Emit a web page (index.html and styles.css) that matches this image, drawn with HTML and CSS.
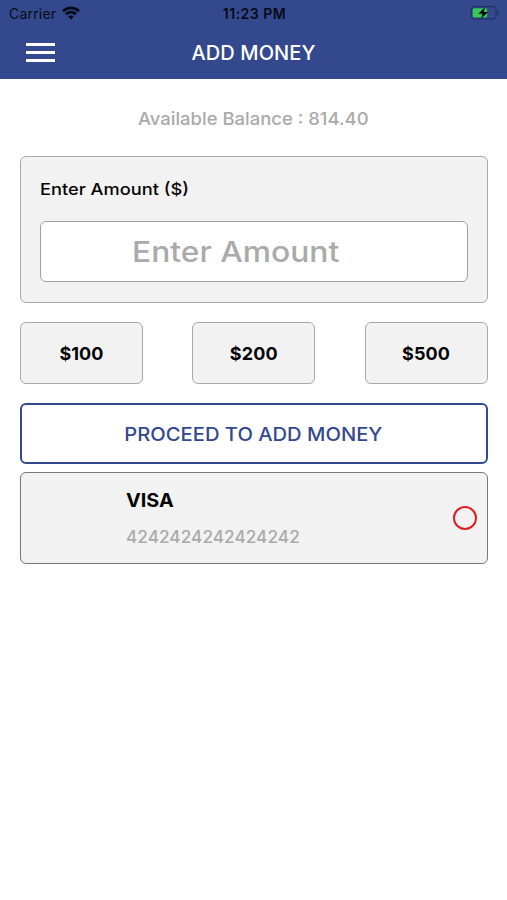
FILE: index.html
```html
<!DOCTYPE html>
<html lang="en">
<head>
<meta charset="utf-8">
<title>Add Money</title>
<link rel="stylesheet" href="styles.css">
</head>
<body>
<header class="header">
  <div class="status">
    <div class="carrier"><span>Carrier</span>
      <svg width="18" height="14" viewBox="0 0 18 14" fill="none" stroke="#050a18" stroke-width="2.7"><path d="M1 5.200C5.500.700 12.500.700 17 5.200M4 8.300c2.800-2.800 7.200-2.800 10 0"/><path d="M6.200 10.600c1.600-1.500 4-1.500 5.600 0L9 13.500z" fill="#050a18" stroke="none"/></svg>
    </div>
    <time class="time">11:23 PM</time>
    <svg class="battery" width="30" height="14" viewBox="0 0 30 14"><rect x="1.200" y=".7" width="25" height="12.200" rx="3" fill="none" stroke="#1e2b57"/><rect x="2.700" y="2.200" width="14.500" height="9.200" rx="1.500" fill="#35c759"/><path d="M27.700 4.500c2 1 2 3.600 0 4.600z" fill="#1e2b57"/><path d="M14.800 1.500 8.300 7.700h4.200l-1.300 4.800 6.900-6.500h-4.300z" fill="#020611"/></svg>
  </div>
  <div class="navbar">
    <button class="menu" aria-label="Menu"><i></i><i></i><i></i></button>
    <h1 class="title">ADD MONEY</h1>
  </div>
</header>
<main class="content">
  <p class="balance"><span class="wide">Available Balance : 814.40</span></p>
  <section class="amount">
    <label class="label"><span class="wide">Enter Amount ($)</span></label>
    <div class="field"><span class="wide">Enter Amount</span></div>
  </section>
  <div class="presets">
    <button class="preset">$100</button>
    <button class="preset">$200</button>
    <button class="preset">$500</button>
  </div>
  <button class="proceed"><span class="wide">PROCEED TO ADD MONEY</span></button>
  <section class="card">
    <div class="details">
      <strong class="brand"><span class="wide">VISA</span></strong>
      <span class="number"><span class="wide">4242424242424242</span></span>
    </div>
    <span class="radio"></span>
  </section>
</main>
</body>
</html>
```
FILE: styles.css
```css
* { box-sizing: border-box; }
body { margin: 0; background: #fff; color: #050505; font-family: Inter, sans-serif; }
button { font-family: inherit; padding: 0; margin: 0; color: inherit; }
.wide { display: inline-block; transform: scaleX(var(--stretch)); transform-origin: var(--origin, left) center; }
.header { height: 79px; background: #34498d; }
.status { height: 27px; display: grid; grid-template-columns: 1fr auto 1fr; align-items: center; padding: 0 7px 0 9px; color: #050a18; font-size: 14px; }
.carrier { display: flex; align-items: center; gap: 6px; letter-spacing: .2px; }
.carrier svg { margin-top: -2px; }
.time { font-size: 14px; font-weight: 600; letter-spacing: .5px; }
.battery { justify-self: end; margin-top: -1px; }
.navbar { height: 50px; display: grid; grid-template-columns: 65px 1fr 65px; align-items: center; }
.menu { width: 29px; margin-left: 25.500px; border: 0; background: none; display: grid; gap: 5px; }
.menu i { height: 3px; background: #fff; }
.title { margin: 0; padding-top: 1px; text-align: center; color: #fff; font-size: 20px; font-weight: 500; line-height: 24px; letter-spacing: .1px; }
.content { padding: 0 19.500px 0 20px; }
.balance { --stretch: 1.055; --origin: center; margin: 28px 0 0; height: 24px; line-height: 24px; text-align: center; color: #aaa; font-size: 17.500px; font-weight: 500; }
.amount { margin-top: 24.500px; height: 147px; padding: 22px 18.500px 0 19px; border: 1px solid #a9a9a9; border-radius: 6px; background: #f2f2f2; }
.label { --stretch: 1.105; display: block; line-height: 21px; font-size: 16.500px; font-weight: 500; }
.field { --stretch: 1.135; margin-top: 21px; height: 61px; padding: 2px 0 0 90.500px; border: 1px solid #a0a0a0; border-radius: 6px; background: #fff; display: flex; align-items: center; color: #aaa; font-size: 28px; font-weight: 500; }
.presets { margin-top: 19px; display: flex; justify-content: space-between; }
.preset { width: 123px; height: 62px; padding-top: 1px; border: 1px solid #a9a9a9; border-radius: 6px; background: #f2f2f2; font-size: 18px; font-weight: 700; letter-spacing: .1px; }
.proceed { --stretch: 1.090; --origin: center; display: block; width: 100%; height: 61px; margin-top: 19px; padding-top: 2px; border: 2px solid #34498d; border-radius: 6px; background: #fff; color: #34498d; font-size: 18.500px; font-weight: 500; }
.card { margin-top: 8px; height: 92px; padding: 0 9.500px 0 104.500px; border: 1px solid #777; border-radius: 6px; background: #f2f2f2; display: flex; align-items: center; justify-content: space-between; }
.details { display: grid; gap: 13px; padding-top: 2px; }
.brand { --stretch: 1.070; font-size: 18.500px; font-weight: 700; line-height: 24px; }
.number { --stretch: 1.015; color: #aaa; font-size: 17px; font-weight: 500; line-height: 24px; }
.radio { width: 24px; height: 24px; border: 2px solid #dd1f25; border-radius: 50%; }
```
